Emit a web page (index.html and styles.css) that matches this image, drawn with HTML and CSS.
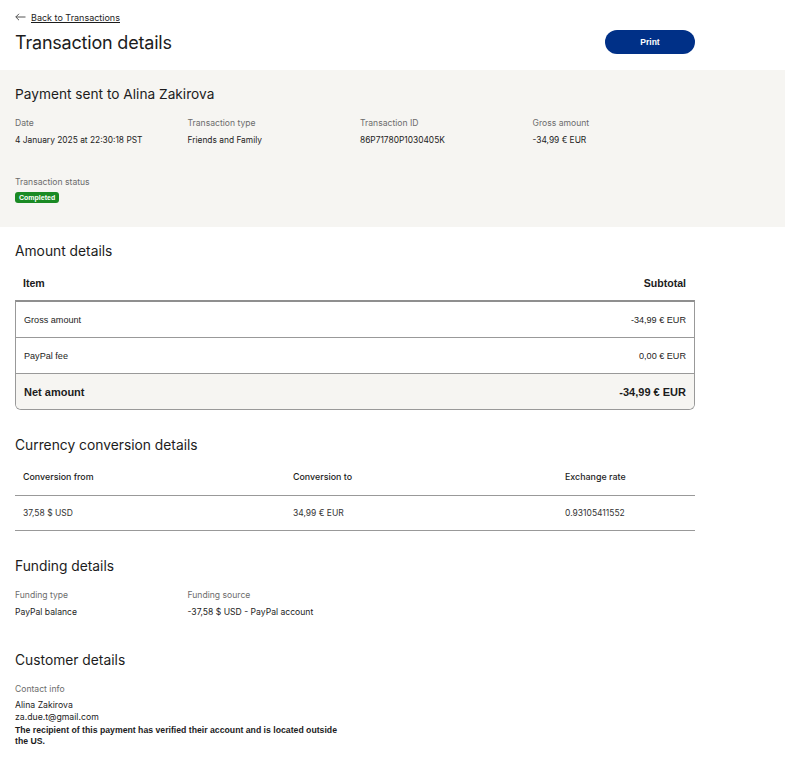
FILE: index.html
```html
<!DOCTYPE html>
<html lang="en">
<head>
    <meta charset="UTF-8">
    <title>Transaction details</title>
    <link rel="stylesheet" href="styles.css">
</head>
<body>
<div class="top">
    <a class="back" href="#">
        <svg class="back-arrow" width="11" height="8" viewBox="0 0 11 8"><path d="M4 0.8 L0.8 4 L4 7.2 M0.8 4 H10.5" fill="none" stroke="#555" stroke-width="1"/></svg>
        <span>Back to Transactions</span>
    </a>
    <div class="top-row">
        <h1 class="page-title">Transaction details</h1>
        <button class="btn-print">Print</button>
    </div>
</div>

<div class="summary">
    <h2 class="summary-title">Payment sent to Alina Zakirova</h2>
    <div class="fields">
        <div class="field">
            <div class="label">Date</div>
            <div class="value">4 January 2025 at 22:30:18 PST</div>
        </div>
        <div class="field">
            <div class="label">Transaction type</div>
            <div class="value">Friends and Family</div>
        </div>
        <div class="field">
            <div class="label">Transaction ID</div>
            <div class="value">86P71780P1030405K</div>
        </div>
        <div class="field">
            <div class="label">Gross amount</div>
            <div class="value">-34,99 € EUR</div>
        </div>
    </div>
    <div class="status">
        <div class="label">Transaction status</div>
        <span class="badge">Completed</span>
    </div>
</div>

<div class="main">
    <section class="block">
        <h3 class="section-title">Amount details</h3>
        <div class="amount-head">
            <span>Item</span>
            <span>Subtotal</span>
        </div>
        <div class="amount-box">
            <div class="amount-row">
                <span>Gross amount</span>
                <span>-34,99 € EUR</span>
            </div>
            <div class="amount-row">
                <span>PayPal fee</span>
                <span>0,00 € EUR</span>
            </div>
            <div class="amount-row total">
                <span>Net amount</span>
                <span>-34,99 € EUR</span>
            </div>
        </div>
    </section>

    <section class="block">
        <h3 class="section-title">Currency conversion details</h3>
        <div class="conv conv-head">
            <span>Conversion from</span>
            <span>Conversion to</span>
            <span>Exchange rate</span>
        </div>
        <div class="conv conv-body">
            <span>37,58 $ USD</span>
            <span>34,99 € EUR</span>
            <span>0.93105411552</span>
        </div>
    </section>

    <section class="block funding">
        <h3 class="section-title">Funding details</h3>
        <div class="fields">
            <div class="field">
                <div class="label">Funding type</div>
                <div class="value">PayPal balance</div>
            </div>
            <div class="field wide">
                <div class="label">Funding source</div>
                <div class="value">-37,58 $ USD - PayPal account</div>
            </div>
        </div>
    </section>

    <section class="block">
        <h3 class="section-title">Customer details</h3>
        <div class="label">Contact info</div>
        <div class="contact">
            <div>Alina Zakirova</div>
            <div>za.due.t@gmail.com</div>
            <div class="note">The recipient of this payment has verified their account and is located outside the US.</div>
        </div>
    </section>
</div>
</body>
</html>
```

FILE: styles.css
```css
body {
    margin: 0;
    background: #fff;
    color: #1c1c1c;
    font-family: Inter, "Liberation Sans", sans-serif;
}

h1, h2, h3 {
    margin: 0;
    font-weight: 400;
}

/* header */
.top {
    box-sizing: border-box;
    width: 695px;
    height: 70px;
    padding: 11px 0 0 15px;
}

.back {
    display: flex;
    align-items: center;
    gap: 5px;
    height: 12px;
    color: #1c1c1c;
    font-size: 9px;
}

.back-arrow {
    display: block;
}

.back span {
    text-decoration: underline;
}

.top-row {
    display: flex;
    justify-content: space-between;
    align-items: center;
    margin-top: 9px;
    height: 22px;
}

.page-title {
    font-size: 18px;
    line-height: 22px;
    letter-spacing: -0.2px;
}

.btn-print {
    width: 90px;
    height: 24px;
    border: none;
    border-radius: 12px;
    background: #003087;
    color: #fff;
    font-family: "Liberation Sans", sans-serif;
    font-weight: 700;
    font-size: 8.5px;
    margin-top: -2px;
}

/* summary band */
.summary {
    box-sizing: border-box;
    height: 157px;
    background: #f6f5f2;
    padding: 16px 15px 0;
}

.summary-title {
    font-size: 13.7px;
    line-height: 17px;
    margin-bottom: 14px;
}

.fields {
    display: grid;
    grid-template-columns: repeat(4, 172.5px);
}

.label {
    font-size: 8.6px;
    color: #6c6c6c;
    line-height: 12px;
}

.value {
    font-size: 8.4px;
    color: #1c1c1c;
    line-height: 12px;
    margin-top: 5px;
}

.status {
    margin-top: 30px;
}

.badge {
    display: block;
    width: fit-content;
    margin-top: 4px;
    background: #1a8a24;
    color: #fff;
    font-family: "Liberation Sans", sans-serif;
    font-weight: 700;
    font-size: 7px;
    line-height: 11px;
    padding: 0 4px;
    border-radius: 3px;
}

/* main */
.main {
    width: 680px;
    padding: 15.5px 0 0 15px;
}

.block {
    margin-bottom: 27px;
}

.block.funding {
    margin-bottom: 34px;
}

.section-title {
    font-size: 13.8px;
    line-height: 17px;
    margin-bottom: 14px;
}

.amount-head {
    box-sizing: border-box;
    display: flex;
    justify-content: space-between;
    align-items: flex-start;
    height: 26.5px;
    padding: 4px 9px 0 8px;
    font-family: "Liberation Sans", sans-serif;
    font-weight: 700;
    font-size: 10.6px;
    line-height: 11px;
}

.amount-box {
    border: 1px solid #999;
    border-top: 2px solid #8f8f8f;
    border-radius: 0 0 6px 6px;
    overflow: hidden;
    font-family: "Liberation Sans", sans-serif;
}

.amount-row {
    display: flex;
    justify-content: space-between;
    align-items: center;
    height: 35px;
    padding: 0 8px;
    font-size: 9.1px;
    border-top: 1px solid #999;
}

.amount-row:first-child {
    border-top: none;
}

.amount-row.total {
    background: #f6f5f2;
    font-weight: 700;
    font-size: 11px;
}

.conv {
    box-sizing: border-box;
    display: grid;
    grid-template-columns: 270px 272px 1fr;
    padding: 0 8px;
    font-size: 8.5px;
    border-bottom: 1px solid #999;
}

.conv-head {
    height: 27.5px;
    align-items: start;
    padding-top: 3px;
    line-height: 11px;
    font-size: 8.9px;
    font-weight: 500;
}

.conv-body {
    height: 35px;
    align-items: center;
    color: #333;
}

.wide {
    grid-column: span 2;
}

.funding .value {
    font-size: 8.6px;
}

.contact {
    margin-top: 4.5px;
    font-size: 8.7px;
    line-height: 12px;
}

.note {
    width: 330px;
    margin-top: 1.5px;
    font-family: "Liberation Sans", sans-serif;
    font-weight: 700;
    font-size: 8.7px;
    line-height: 11px;
}
```
